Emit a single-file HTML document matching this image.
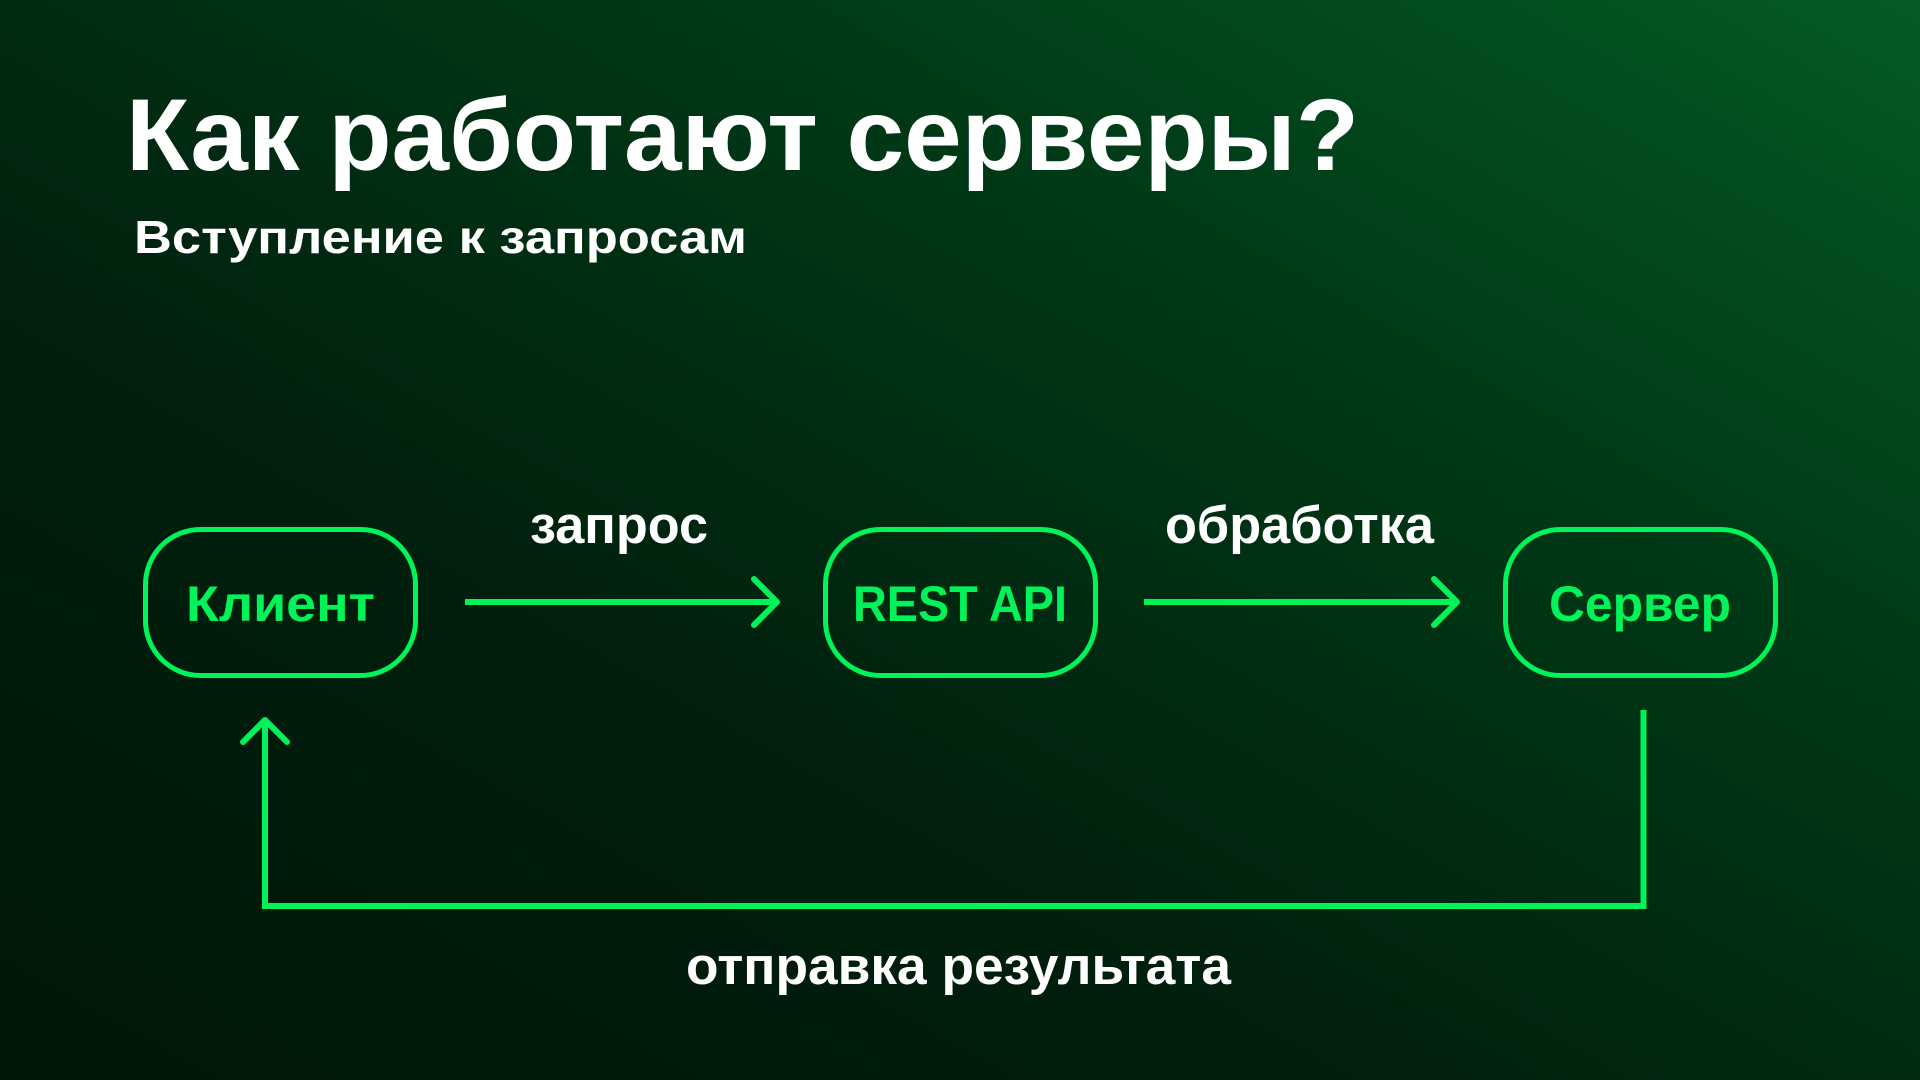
<!DOCTYPE html>
<html><head><meta charset="utf-8"><style>
html,body{margin:0;padding:0;width:1920px;height:1080px;overflow:hidden;background:#012010}
svg{display:block}
text{font-family:"Liberation Sans","DejaVu Sans",sans-serif;font-weight:bold}
</style></head><body>
<svg width="1920" height="1080" viewBox="0 0 1920 1080" xmlns="http://www.w3.org/2000/svg">
<defs>
<linearGradient id="bg" x1="0" y1="1" x2="1" y2="0" gradientUnits="objectBoundingBox">
<stop offset="0" stop-color="#001508"/>
<stop offset="0.35" stop-color="#011f0d"/>
<stop offset="0.7" stop-color="#003a17"/>
<stop offset="1" stop-color="#045a25"/>
</linearGradient>
</defs>
<rect width="1920" height="1080" fill="url(#bg)"/>
<text x="126" y="170" font-size="102" fill="#fff" textLength="1233" lengthAdjust="spacingAndGlyphs">Как работают серверы?</text>
<text x="134" y="253" font-size="46" fill="#fff" textLength="613" lengthAdjust="spacingAndGlyphs">Вступление к запросам</text>

<g fill="none" stroke="#00f359" stroke-width="5">
<rect x="145.5" y="529.5" width="270" height="146" rx="55"/>
<rect x="825.5" y="529.5" width="270" height="146" rx="55"/>
<rect x="1505.5" y="529.5" width="270" height="146" rx="55"/>
</g>
<g fill="none" stroke="#00f359" stroke-width="6" stroke-linecap="round" stroke-linejoin="round">
<line x1="465" y1="602" x2="776" y2="602" stroke-linecap="butt"/>
<polyline points="754,579 777,602 754,625"/>
<line x1="1144" y1="602" x2="1456" y2="602" stroke-linecap="butt"/>
<polyline points="1434,579 1457,602 1434,625"/>
<polyline points="1643.5,710 1643.5,906 265,906 265,722" stroke-linecap="butt" stroke-linejoin="miter"/>
<polyline points="243,742 265,720 287,742"/>
</g>

<g fill="#00f359" font-size="50">
<text x="186" y="621" textLength="189" lengthAdjust="spacingAndGlyphs">Клиент</text>
<text x="853" y="621" textLength="214" lengthAdjust="spacingAndGlyphs">REST API</text>
<text x="1549" y="621" textLength="182" lengthAdjust="spacingAndGlyphs">Сервер</text>
</g>
<g fill="#fff" font-size="53">
<text x="530" y="543" textLength="178" lengthAdjust="spacingAndGlyphs">запрос</text>
<text x="1165" y="543" textLength="269" lengthAdjust="spacingAndGlyphs">обработка</text>
<text x="686" y="984" textLength="545" lengthAdjust="spacingAndGlyphs">отправка результата</text>
</g>
</svg>
</body></html>
